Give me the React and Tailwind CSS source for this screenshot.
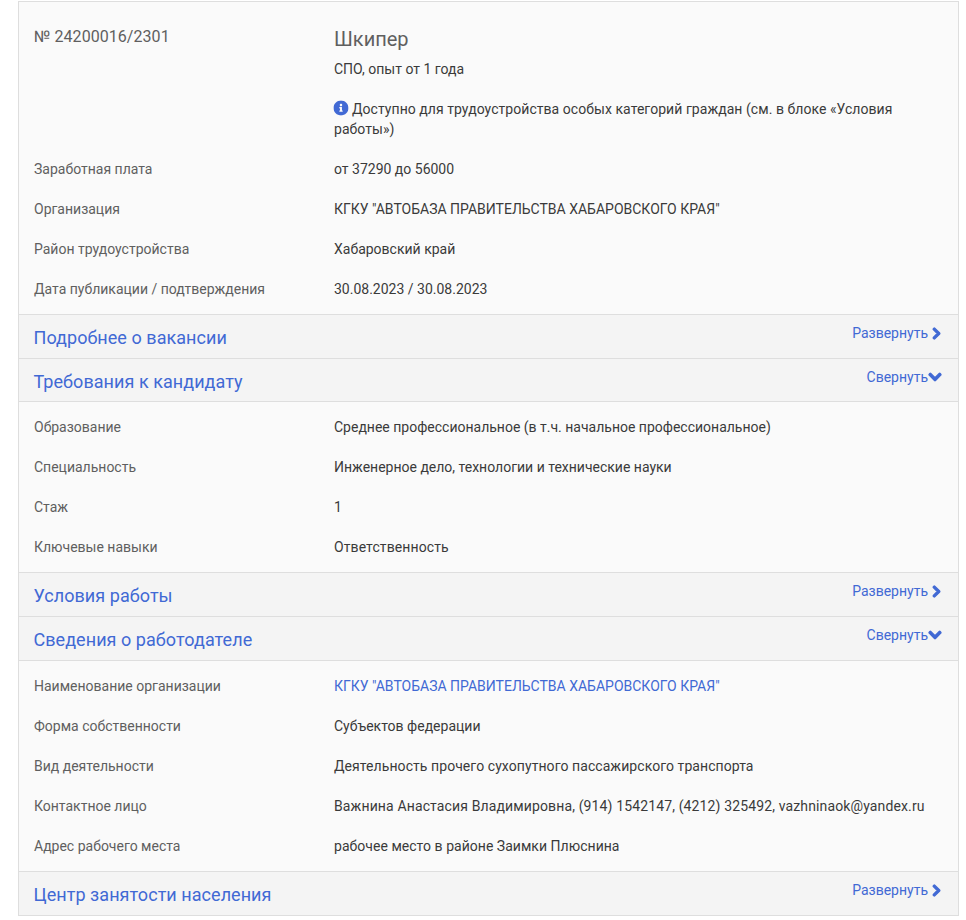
import { FaChevronRight, FaChevronDown, FaInfoCircle } from 'react-icons/fa'

const BLUE = 'text-[#4169d4]'

function Row({ label, children, valueClass = '' }) {
  return (
    <div className="grid grid-cols-[300px_1fr] h-10 items-center">
      <div className="text-[#5f5f5f]">{label}</div>
      <div className={`text-[#3a3a3a] ${valueClass}`}>{children}</div>
    </div>
  )
}

function Header({ title, open, height = 'h-[44px]' }) {
  return (
    <div className={`relative ${height} bg-[#f4f4f4] border-t border-[#dedede] pl-[14.5px] pr-[15px]`}>
      <div className={`pt-[11px] text-[18px] leading-[24px] tracking-[0.05px] ${BLUE}`}>{title}</div>
      <div className={`absolute right-[16px] top-[8px] flex items-center leading-[20px] ${BLUE}`}>
        {open ? 'Свернуть' : 'Развернуть'}
        {open
          ? <FaChevronDown className="w-[14px] h-[14px] stroke-current stroke-[50px]" />
          : <FaChevronRight className="ml-[3px] w-[11px] h-[13px] stroke-current stroke-[50px]" />}
      </div>
    </div>
  )
}

export default function App() {
  return (
    <div className="w-[966px] h-[920px] bg-white pt-[1px] pl-[18px] font-['Roboto',sans-serif] text-[14px] leading-[20px]">
      <div className="w-[941px] bg-[#fafafa] border border-[#dedede]">
        <div className="px-[15px] pt-[23px] pb-[5px]">
          <div className="grid grid-cols-[300px_1fr]">
            <div className="pt-[2px] text-[16px] leading-[20px] tracking-[0.05px] text-[#5f5f5f]">№ 24200016/2301</div>
            <div>
              <div className="text-[20px] leading-[24px] pt-[2px] text-[#5f5f5f]">Шкипер</div>
              <div className="mt-[8px] text-[#3a3a3a]">СПО, опыт от 1 года</div>
              <div className="mt-[20px] pb-[10px] tracking-[0.05px] text-[#3a3a3a]">
                <FaInfoCircle className={`inline w-[14px] h-[14px] mr-[4px] align-[-1px] scale-110 ${BLUE}`} />
                Доступно для трудоустройства особых категорий граждан (см. в блоке «Условия работы»)
              </div>
            </div>
          </div>
          <Row label="Заработная плата">от 37290 до 56000</Row>
          <Row label="Организация">КГКУ "АВТОБАЗА ПРАВИТЕЛЬСТВА ХАБАРОВСКОГО КРАЯ"</Row>
          <Row label="Район трудоустройства">Хабаровский край</Row>
          <Row label="Дата публикации / подтверждения">30.08.2023 / 30.08.2023</Row>
        </div>

        <Header title="Подробнее о вакансии" />
        <Header title="Требования к кандидату" open height="h-[43px]" />
        <div className="border-t border-[#dedede] px-[15px] py-[5px]">
          <Row label="Образование">Среднее профессиональное (в т.ч. начальное профессиональное)</Row>
          <Row label="Специальность">Инженерное дело, технологии и технические науки</Row>
          <Row label="Стаж">1</Row>
          <Row label="Ключевые навыки" valueClass="tracking-[0.1px]">Ответственность</Row>
        </div>

        <Header title="Условия работы" />
        <Header title="Сведения о работодателе" open />
        <div className="border-t border-[#dedede] px-[15px] py-[5px]">
          <Row label="Наименование организации">
            <span className={BLUE}>КГКУ "АВТОБАЗА ПРАВИТЕЛЬСТВА ХАБАРОВСКОГО КРАЯ"</span>
          </Row>
          <Row label="Форма собственности">Субъектов федерации</Row>
          <Row label="Вид деятельности" valueClass="tracking-[0.07px]">Деятельность прочего сухопутного пассажирского транспорта</Row>
          <Row label="Контактное лицо" valueClass="tracking-[0.13px]">Важнина Анастасия Владимировна, (914) 1542147, (4212) 325492, vazhninaok@yandex.ru</Row>
          <Row label="Адрес рабочего места" valueClass="tracking-[0.03px]">рабочее место в районе Заимки Плюснина</Row>
        </div>

        <Header title="Центр занятости населения" />
      </div>
    </div>
  )
}
